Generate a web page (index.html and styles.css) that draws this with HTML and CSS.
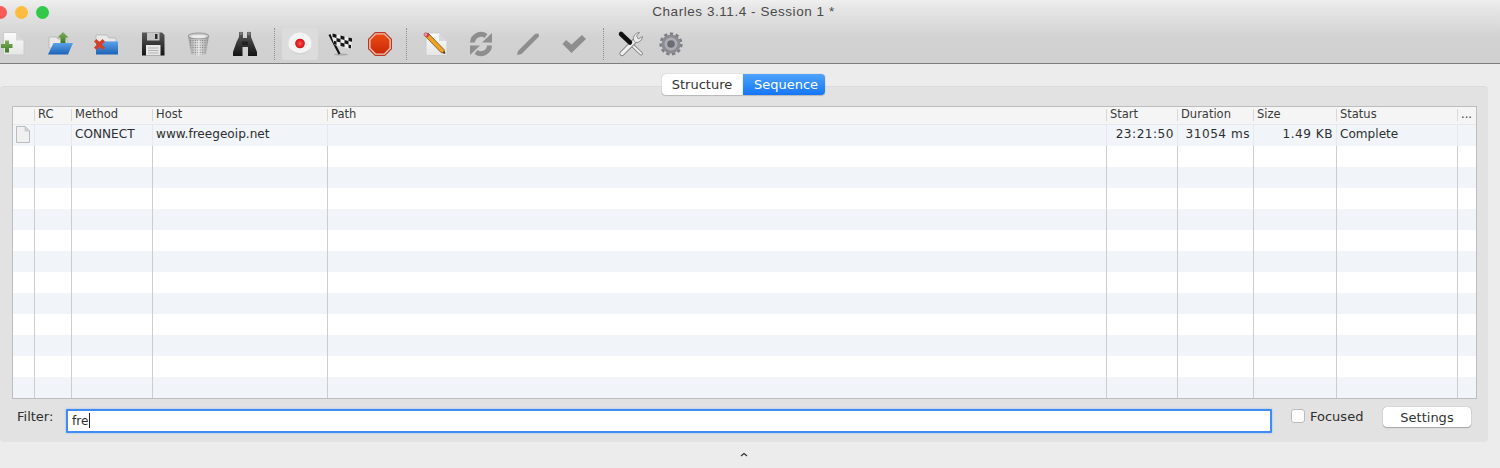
FILE: index.html
```html
<!DOCTYPE html>
<html lang="en">
<head>
  <meta charset="UTF-8">
  <title>Charles 3.11.4 - Session 1 *</title>
  <link rel="stylesheet" href="styles.css">
</head>
<body>

  <!-- TITLE + TOOLBAR -->
  <header class="chrome">
    <div class="titlebar">
      <div class="lights">
        <span class="light red"></span>
        <span class="light yellow"></span>
        <span class="light green"></span>
      </div>
      <span class="title">Charles 3.11.4 - Session 1 *</span>
    </div>

    <div class="toolbar">
      <div class="group group-file">
        <svg class="icon" viewBox="0 0 24 24">
          <defs>
            <linearGradient id="paper" x1="0" y1="0" x2="0" y2="1"><stop offset="0" stop-color="#fafafa"/><stop offset="1" stop-color="#e6e6e6"/></linearGradient>
            <linearGradient id="plus" x1="0" y1="0" x2="0" y2="1"><stop offset="0" stop-color="#82b060"/><stop offset="1" stop-color="#3c7a26"/></linearGradient>
            <linearGradient id="blue" x1="0" y1="0" x2="0" y2="1"><stop offset="0" stop-color="#5aa2e8"/><stop offset="1" stop-color="#1c62b8"/></linearGradient>
            <linearGradient id="black" x1="0" y1="0" x2="0" y2="1"><stop offset="0" stop-color="#5a5a5a"/><stop offset="1" stop-color="#141414"/></linearGradient>
            <linearGradient id="steel" x1="0" y1="0" x2="1" y2="0"><stop offset="0" stop-color="#9c9c9c"/><stop offset=".5" stop-color="#ececec"/><stop offset="1" stop-color="#9c9c9c"/></linearGradient>
            <linearGradient id="stopfill" x1="0" y1="0" x2="0" y2="1"><stop offset="0" stop-color="#ec4a12"/><stop offset="1" stop-color="#c92a08"/></linearGradient>
            <pattern id="mesh" width="2.4" height="2.4" patternUnits="userSpaceOnUse"><circle cx="1.2" cy="1.2" r=".6" fill="#777"/></pattern>
          </defs>
          <path d="M1.5 0.5H14L22 8.5V23H1.5Z" fill="url(#paper)" stroke="#cbcbcb"/>
          <path d="M14 .5V8.5H22Z" fill="#d8d8d8"/>
          <path d="M3.5 7.5H7.5V11H11V15H7.5V19.5H3.5V15H-.5V11H3.5Z" fill="url(#plus)" transform="translate(-.5 1)"/>
        </svg>
        <svg class="icon" viewBox="0 0 24 24">
          <path d="M1 5H8L10 7H19V16H1Z" fill="#e9e9e9" stroke="#b4b4b4" stroke-width=".8"/>
          <path d="M5.5 11H25L20 22.500H0Z" fill="url(#blue)"/>
          <path d="M15 0L20.500 5.500H17.500V11H12.500V5.500H9.500Z" fill="url(#plus)"/>
        </svg>
        <svg class="icon" viewBox="0 0 24 24">
          <path d="M2 3H13L15 6H22V10H2Z" fill="#e9e9e9" stroke="#b4b4b4" stroke-width=".8"/>
          <path d="M2 9.500H24V22.500H2Z" fill="url(#blue)"/>
          <path d="M2.500 7L5.500 10L8.500 7L11 9.500L8 12.500L11 15.500L8.500 18L5.500 15L2.500 18L0 15.500L3 12.500L0 9.500Z" fill="#d4402a"/>
        </svg>
        <svg class="icon" viewBox="0 0 24 24">
          <path d="M1 0.500H21L23.500 3V23.500H1Z" fill="url(#black)"/>
          <path d="M6 .5H18.500V8.500H6Z" fill="#c6c6c6"/>
          <path d="M14 2H16.500V7H14Z" fill="#2b2b2b"/>
          <path d="M5 13H19.500V23.500H5Z" fill="#e8e8e8"/>
          <path d="M7 16H17.500M7 18.500H17.500M7 21H17.500" stroke="#b0b0b0"/>
        </svg>
        <svg class="icon" viewBox="0 0 24 24">
          <path d="M1 4L4 22Q11.500 25 19 22L22 4Z" fill="url(#steel)"/>
          <path d="M2 6L4.500 21.500Q11.500 24 18.500 21.500L21 6Z" fill="url(#mesh)"/>
          <ellipse cx="11.500" cy="4" rx="10.500" ry="3" fill="#c8c8c8" stroke="#9a9a9a"/>
          <ellipse cx="11.500" cy="4.500" rx="8" ry="1.600" fill="#ececec"/>
        </svg>
        <svg class="icon" viewBox="0 0 24 24">
          <path d="M6 0H10V6H14V0H18V5L20 10L24 20V24H15V15H9.500V24H0V20L3.500 10L6 5Z" fill="url(#black)"/>
          <circle cx="8" cy="1.500" r="1.800" fill="#777"/>
          <circle cx="16" cy="1.500" r="1.800" fill="#777"/>
          <path d="M9 9.500H15V13H9Z" fill="#222"/>
        </svg>
      </div>

      <span class="sep"></span>

      <div class="group group-record">
        <div class="toggled">
          <svg class="icon" viewBox="0 0 24 24">
            <defs>
              <radialGradient id="dot"><stop offset="0" stop-color="#f55"/><stop offset="1" stop-color="#d40a0a"/></radialGradient>
            </defs>
            <circle cx="12" cy="12" r="11.500" fill="#f4f4f4"/>
            <path d="M.5 12A11.500 11.500 0 0 0 23.500 12A11.500 9 0 0 1 .5 12Z" fill="#d6d6d6"/>
            <circle cx="12" cy="11.500" r="4.800" fill="url(#dot)"/>
          </svg>
        </div>
        <svg class="icon" viewBox="0 0 24 24">
          <ellipse cx="10" cy="22.500" rx="7" ry="1" fill="#aaa"/>
          <path d="M-1.500 2.500L8.500 22" stroke="#111" stroke-width="2.200"/>
          <g transform="translate(-.5 1) skewY(14)">
            <path d="M0 0H21V11H4Z" fill="#eeeeee"/>
            <path d="M2 0H6V3.500H2ZM10 0H14V3.500H10ZM18 0H21.500V3.500H18ZM6 3.500H10V7H6ZM14 3.500H18V7H14ZM3.500 7H6V10.500H3.500ZM10 7H14V10.500H10ZM18 7H20.500V10.500H18Z" fill="#161616"/>
          </g>
        </svg>
        <svg class="icon" viewBox="0 0 24 24">
          <path d="M7 0H17L24 7V17L17 24H7L0 17V7Z" fill="#b83a22"/>
          <path d="M7.400 1.200H16.600L22.800 7.400V16.600L16.600 22.800H7.400L1.200 16.600V7.400Z" fill="#f2c4b6"/>
          <path d="M8 2.600H16L21.400 8V16L16 21.400H8L2.600 16V8Z" fill="url(#stopfill)"/>
        </svg>
      </div>

      <span class="sep sep-edit"></span>

      <div class="group group-edit">
        <svg class="icon" viewBox="0 0 24 24">
          <path d="M3 1H16L24 9V23.500H3Z" fill="url(#paper)" stroke="#cdcdcd"/>
          <path d="M16 1V9H24Z" fill="#dadada"/>
          <path d="M2 4L5 1L21 17.500L22 21.500L18 20.500Z" fill="#f0a21e" stroke="#5c4420" stroke-width=".7"/>
          <path d="M2.500 3.500L5 1L7 3L4.500 5.500Z" fill="#d93d4c"/>
          <circle cx="2.800" cy="2.600" r="1.800" fill="#e8a0a8" stroke="#b02a38" stroke-width=".6"/>
          <path d="M20 20.500L22 21.500L21 19Z" fill="#222"/>
        </svg>
        <svg class="icon" viewBox="0 0 24 24">
          <g id="sync-half">
            <path d="M3.500 10.500A8.500 8.500 0 0 1 17 4" fill="none" stroke="#8e8e8e" stroke-width="5"/>
            <path d="M23 1V10.500H13Z" fill="#8e8e8e"/>
          </g>
          <use href="#sync-half" transform="rotate(180 12 12)"/>
        </svg>
        <svg class="icon" viewBox="0 0 24 24">
          <path d="M1 23L2 19L19 2L22.500 1.500L23 4.500L5.500 22Z" fill="#8e8e8e"/>
        </svg>
        <svg class="icon" viewBox="0 0 24 24">
          <path d="M0.500 12L4 8L9.500 12.500L20 3L24 7L9.500 21Z" fill="#8e8e8e"/>
        </svg>
      </div>

      <span class="sep sep-tools"></span>

      <div class="group group-tools">
        <svg class="icon" viewBox="0 0 24 24">
          <path d="M11 11L22 21.500" stroke="#6f6f6f" stroke-width="3.600" stroke-linecap="round"/>
          <path d="M11 11L22 21.500" stroke="#efefef" stroke-width="2.200" stroke-linecap="round"/>
          <path d="M3 21.500L16.500 8" stroke="#6f6f6f" stroke-width="5" stroke-linecap="round"/>
          <path d="M3 21.500L16.500 8" stroke="#f0f0f0" stroke-width="3.500" stroke-linecap="round"/>
          <path d="M14.500 8A6.200 6.200 0 0 1 20.500 .5L17.500 4L19.500 7L23.500 4.500A6.200 6.200 0 0 1 16.500 10.500Z" fill="#ececec" stroke="#777" stroke-width=".8"/>
          <path d="M2 2L11 10.500" stroke="#111" stroke-width="4.500" stroke-linecap="round"/>
        </svg>
        <svg class="icon" viewBox="0 0 24 24">
          <circle cx="12" cy="12" r="10.200" fill="none" stroke="#7d7d85" stroke-width="2.800" stroke-dasharray="3.200 2.630"/>
          <circle cx="12" cy="12" r="9.500" fill="#8b8b93"/>
          <circle cx="12" cy="12" r="6.500" fill="#adadb3"/>
          <circle cx="12" cy="12" r="3.800" fill="#6c6c74"/>
        </svg>
      </div>
    </div>
  </header>

  <!-- SESSION -->
  <main class="content">
    <div class="tabs">
      <span class="tab">Structure</span>
      <span class="tab active">Sequence</span>
    </div>

    <section class="panel">
      <div class="table">
        <div class="row head">
          <span></span>
          <span>RC</span>
          <span>Method</span>
          <span>Host</span>
          <span>Path</span>
          <span>Start</span>
          <span>Duration</span>
          <span>Size</span>
          <span>Status</span>
          <span>...</span>
        </div>
        <div class="row first">
          <span>
            <svg class="file" viewBox="0 0 14 17">
              <path d="M.5.5H9L13.500 5V16.500H.5Z" fill="#f0f0f0" stroke="#bcbcbc"/>
              <path d="M9 .5V5H13.500Z" fill="#d4d4d4" stroke="#bcbcbc" stroke-width=".6"/>
            </svg>
          </span>
          <span></span>
          <span>CONNECT</span>
          <span>www.freegeoip.net</span>
          <span></span>
          <span class="num">23:21:50</span>
          <span class="num">31054 ms</span>
          <span class="num">1.49 KB</span>
          <span>Complete</span>
          <span></span>
        </div>
        <div class="row"><span></span><span></span><span></span><span></span><span></span><span></span><span></span><span></span><span></span><span></span></div>
        <div class="row"><span></span><span></span><span></span><span></span><span></span><span></span><span></span><span></span><span></span><span></span></div>
        <div class="row"><span></span><span></span><span></span><span></span><span></span><span></span><span></span><span></span><span></span><span></span></div>
        <div class="row"><span></span><span></span><span></span><span></span><span></span><span></span><span></span><span></span><span></span><span></span></div>
        <div class="row"><span></span><span></span><span></span><span></span><span></span><span></span><span></span><span></span><span></span><span></span></div>
        <div class="row"><span></span><span></span><span></span><span></span><span></span><span></span><span></span><span></span><span></span><span></span></div>
        <div class="row"><span></span><span></span><span></span><span></span><span></span><span></span><span></span><span></span><span></span><span></span></div>
        <div class="row"><span></span><span></span><span></span><span></span><span></span><span></span><span></span><span></span><span></span><span></span></div>
        <div class="row"><span></span><span></span><span></span><span></span><span></span><span></span><span></span><span></span><span></span><span></span></div>
        <div class="row"><span></span><span></span><span></span><span></span><span></span><span></span><span></span><span></span><span></span><span></span></div>
        <div class="row"><span></span><span></span><span></span><span></span><span></span><span></span><span></span><span></span><span></span><span></span></div>
        <div class="row"><span></span><span></span><span></span><span></span><span></span><span></span><span></span><span></span><span></span><span></span></div>
      </div>

      <div class="filter">
        <label class="filter-label">Filter:</label>
        <div class="filter-input"><span>fre</span><i class="caret"></i></div>
        <label class="focused"><i class="checkbox"></i>Focused</label>
        <button class="settings">Settings</button>
      </div>
    </section>

    <div class="splitter">
      <svg viewBox="0 0 8 5"><path d="M1 4L4 1.500L7 4" fill="none" stroke="#333" stroke-width="1.200"/></svg>
    </div>
  </main>

</body>
</html>
```

FILE: styles.css
```css
html, body { margin:0; height:468px; overflow:hidden; }
body { background:#ececec; color:#2e2e2e;
       font-family:'DejaVu Sans',sans-serif; font-size:12.1px; }

/* Title + toolbar */
.chrome {
  background:linear-gradient(#efefef 0, #e6e6e6 8px, #d2d2d2 38px, #d0d0d0 100%);
  border-bottom:1px solid #7d7d7d;
}
.titlebar {
  position:relative; height:24px; padding-right:13px;
  display:flex; align-items:center; justify-content:center;
}
.title {
  font-family:'Liberation Sans',sans-serif; font-size:13.5px;
  letter-spacing:0.55px; color:#4a4a4a; margin-top:-1px;
}
.lights { position:absolute; left:-6px; top:6px; display:flex; gap:8px; }
.light { width:13px; height:13px; border-radius:50%; }
.red { background:#fc5b57; }
.yellow { background:#fdbc40; }
.green { background:#34c84a; }

.toolbar { height:39px; display:flex; align-items:center; padding-left:2px; }
.group { display:flex; align-items:center; }
.group-file { gap:22.2px; }
.group-record { gap:13px; margin-left:7px; }
.group-edit { gap:22.5px; }
.group-tools { gap:16px; margin-left:15px; }
.icon { width:24px; height:24px; display:block; overflow:visible; }
.toggled {
  width:36px; height:32px; background:#dcdcdc; border-radius:3px;
  display:flex; align-items:center; justify-content:center;
}
.sep { width:0; height:32px; border-left:1px dotted #8f8f8f; margin-left:17px; }
.sep-edit { margin-left:14px; margin-right:16px; }
.sep-tools { margin-left:16.5px; }

/* Tabs */
.tabs {
  position:relative; display:flex; justify-content:center;
  padding:10px 14px 0 0; margin-bottom:-9px; font-size:13px;
}
.tab {
  width:81px; height:21px; line-height:22px; text-align:center;
  background:#fff; color:#333; box-sizing:border-box;
  border-radius:4px 0 0 4px; box-shadow:0 0 1px #999, 0 1px 1px #bbb;
}
.tab.active {
  width:82px; padding-left:5px; color:#fff; border-radius:0 4px 4px 0;
  background:linear-gradient(#4fa3fb, #1476f6);
}

/* Session panel */
.panel {
  width:1488px; box-sizing:border-box; padding:19px 12px 0;
  background:#e2e2e2; border-top:1px solid #dcdcdc;
  border-radius:4px;
}
.table { width:1465px; background:#fff; border:1px solid #bdbdbd; box-sizing:border-box; }
.row {
  display:grid; height:21px;
  grid-template-columns:22px 37px 81px 175px 779px 71px 76px 83px 121px 1fr;
  line-height:19px;
}
.row:nth-child(even) { background:#f1f4f9; }
.row > span {
  border-right:1px solid #cdcdcd; padding:0 3px; box-sizing:border-box;
  white-space:nowrap; overflow:hidden;
}
.row > span:last-child { border-right:none; }
.row > .num { text-align:right; padding-right:3px; letter-spacing:0.5px; }

.head {
  height:17px; background:#f5f5f5; line-height:15px; font-size:11.5px;
  color:#3a3a3a; border-bottom:1px solid #e9e9e9;
}
.head > span { position:relative; border-right:none; }
.head > span::after {
  content:""; position:absolute; right:0; top:2px; bottom:3px;
  border-right:1px solid #d8d8d8;
}
.head > span:last-child::after { display:none; }
.first > span { border-right-color:#e6eaf0; }
.file { width:14px; height:17px; display:block; margin-top:1px; }

/* Filter row */
.filter { display:flex; align-items:flex-start; height:43px; font-size:13px; }
.filter-label { margin:10px 0 0 5px; width:49px; line-height:16px; }
.filter-input {
  width:1206px; height:24px; margin-top:10px; box-sizing:border-box;
  padding-left:4px; background:#fff; line-height:20px; display:flex;
  border:2px solid #3f8cf5; border-radius:1px; box-shadow:0 0 2px #7fb2f7;
  font-size:12.1px;
}
.caret { width:1px; height:15px; margin:2px 0 0 1px; background:#222; }
.focused {
  display:flex; align-items:center; gap:5px; width:92px;
  margin:9px 0 0 19px; height:16px; line-height:15px;
}
.checkbox {
  width:14px; height:14px; box-sizing:border-box; background:#fff;
  border:1px solid #bbb; border-radius:3px;
}
.settings {
  width:88px; height:20px; margin-top:8px; padding:0;
  background:#fff; border:none; border-radius:4px; color:#333;
  font:inherit; box-shadow:0 0 1px #888, 0 1px 1px #aaa;
}

.splitter { display:flex; justify-content:center; padding:10px 13px 0 0; }
.splitter svg { width:8px; height:5px; display:block; }
```
